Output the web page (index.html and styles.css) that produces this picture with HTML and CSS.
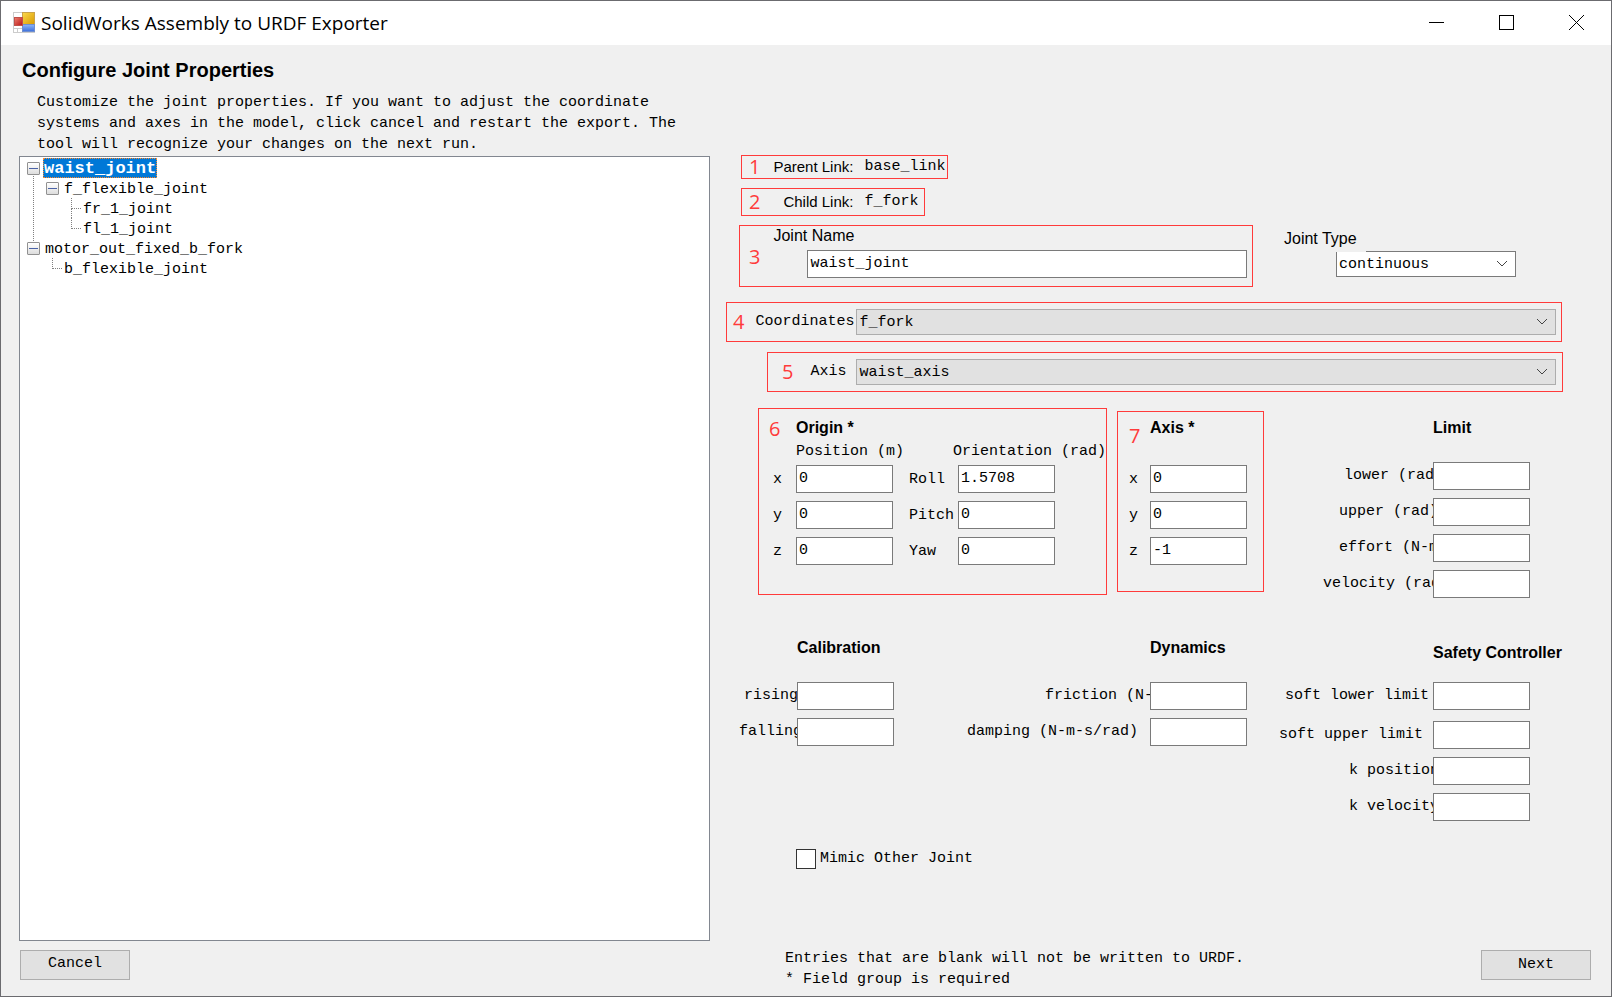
FILE: index.html
```html
<!DOCTYPE html>
<html lang="en">
<head>
    <meta charset="UTF-8">
    <meta name="viewport" content="width=device-width, initial-scale=1.0">
    <title>SolidWorks Assembly to URDF Exporter</title>
    <link rel="stylesheet" href="styles.css">
</head>
<body>

    <!-- Title bar -->
    <header class="title-bar">
        <svg class="app-icon" width="22" height="22" viewBox="0 0 22 22">
            <defs>
                <linearGradient id="yellow" x1="0" y1="0" x2="1" y2="1">
                    <stop offset="0" stop-color="#fbd84c"/>
                    <stop offset="1" stop-color="#d99a00"/>
                </linearGradient>
                <linearGradient id="blue" x1="0" y1="0" x2="0" y2="1">
                    <stop offset="0" stop-color="#8fb6f7"/>
                    <stop offset="1" stop-color="#3c6fdc"/>
                </linearGradient>
                <linearGradient id="red" x1="0" y1="0" x2="1" y2="1">
                    <stop offset="0" stop-color="#ee8070"/>
                    <stop offset="1" stop-color="#b81414"/>
                </linearGradient>
            </defs>
            <rect x="0.5" y="0.5" width="21" height="20" fill="#fff" stroke="#ccc"/>
            <path d="M4.500 16v5M0 16.500h9" stroke="#ccc"/>
            <rect x="9.500" y="0.500" width="12" height="12" fill="url(#yellow)" stroke="#c9a24a"/>
            <rect x="9.500" y="12.500" width="12" height="7" fill="url(#blue)" stroke="#6f8fd0"/>
            <rect x="1.500" y="5.500" width="8" height="8" fill="url(#red)" stroke="#c0504a"/>
        </svg>
        <span class="title-text">SolidWorks Assembly to URDF Exporter</span>
        <button class="window-btn" aria-label="Minimize">
            <svg width="15" height="15"><path d="M0 7.500h15" stroke="#000"/></svg>
        </button>
        <button class="window-btn" aria-label="Maximize">
            <svg width="15" height="15"><rect x="0.500" y="0.500" width="14" height="14" fill="none" stroke="#000"/></svg>
        </button>
        <button class="window-btn" aria-label="Close">
            <svg width="15" height="15"><path d="M0 0l15 15M15 0L0 15" stroke="#000"/></svg>
        </button>
    </header>

    <main class="columns main">

        <!-- Joint tree -->
        <section class="tree-panel">
            <h1>Configure Joint Properties</h1>
            <p class="intro">Customize the joint properties. If you want to adjust the coordinate systems and axes in the model, click cancel and restart the export. The tool will recognize your changes on the next run.</p>
            <div class="tree">
                <ul>
                    <li>
                        <div class="node"><button class="toggle" aria-label="Collapse"></button><span class="name selected">waist_joint</span></div>
                        <ul>
                            <li>
                                <div class="node"><button class="toggle" aria-label="Collapse"></button><span class="name">f_flexible_joint</span></div>
                                <ul>
                                    <li class="leaf"><div class="node"><span class="name">fr_1_joint</span></div></li>
                                    <li class="leaf"><div class="node"><span class="name">fl_1_joint</span></div></li>
                                </ul>
                            </li>
                        </ul>
                    </li>
                    <li>
                        <div class="node"><button class="toggle" aria-label="Collapse"></button><span class="name">motor_out_fixed_b_fork</span></div>
                        <ul>
                            <li class="leaf"><div class="node"><span class="name">b_flexible_joint</span></div></li>
                        </ul>
                    </li>
                </ul>
            </div>
        </section>

        <!-- Joint form -->
        <form class="joint-form">
            <div class="marked link-row parent-row">
                <span class="mark">1</span>
                <span class="link-label">Parent Link:</span>
                <span>base_link</span>
            </div>
            <div class="marked link-row child-row">
                <span class="mark">2</span>
                <span class="link-label">Child Link:</span>
                <span>f_fork</span>
            </div>

            <div class="name-row">
                <div class="marked name-box">
                    <span class="mark">3</span>
                    <div class="name-field">
                        <label class="sans" for="jointName">Joint Name</label>
                        <input type="text" id="jointName" value="waist_joint">
                    </div>
                </div>
                <div class="type-field">
                    <label class="sans" for="jointType">Joint Type</label>
                    <div class="select white">
                        <select id="jointType"><option>continuous</option></select>
                        <svg class="chevron" width="12" height="8"><path d="M1 1l5 5 5-5" fill="none" stroke="#444"/></svg>
                    </div>
                </div>
            </div>

            <div class="marked select-row coordinates-row">
                <span class="mark">4</span>
                <label for="coordinates">Coordinates</label>
                <div class="select">
                    <select id="coordinates"><option>f_fork</option></select>
                    <svg class="chevron" width="12" height="8"><path d="M1 1l5 5 5-5" fill="none" stroke="#444"/></svg>
                </div>
            </div>
            <div class="marked select-row axis-row">
                <span class="mark">5</span>
                <label for="axis">Axis</label>
                <div class="select">
                    <select id="axis"><option>waist_axis</option></select>
                    <svg class="chevron" width="12" height="8"><path d="M1 1l5 5 5-5" fill="none" stroke="#444"/></svg>
                </div>
            </div>

            <div class="groups">
                <div class="marked origin">
                    <span class="mark">6</span>
                    <h2>Origin *</h2>
                    <span class="position-head">Position (m)</span>
                    <span class="orientation-head">Orientation (rad)</span>
                    <label class="coord" for="posX">x</label>
                    <input type="text" id="posX" value="0">
                    <label class="angle" for="roll">Roll</label>
                    <input type="text" id="roll" value="1.5708">
                    <label class="coord" for="posY">y</label>
                    <input type="text" id="posY" value="0">
                    <label class="angle" for="pitch">Pitch</label>
                    <input type="text" id="pitch" value="0">
                    <label class="coord" for="posZ">z</label>
                    <input type="text" id="posZ" value="0">
                    <label class="angle" for="yaw">Yaw</label>
                    <input type="text" id="yaw" value="0">
                </div>

                <div class="marked axis-group">
                    <span class="mark">7</span>
                    <h2>Axis *</h2>
                    <label for="axisX">x</label>
                    <input type="text" id="axisX" value="0">
                    <label for="axisY">y</label>
                    <input type="text" id="axisY" value="0">
                    <label for="axisZ">z</label>
                    <input type="text" id="axisZ" value="-1">
                </div>

                <div class="group limit">
                    <h2>Limit</h2>
                    <div class="field"><label class="lower" for="lower">lower (rad)</label><input type="text" id="lower"></div>
                    <div class="field"><label class="upper" for="upper">upper (rad)</label><input type="text" id="upper"></div>
                    <div class="field"><label class="upper" for="effort">effort (N-m)</label><input type="text" id="effort"></div>
                    <div class="field"><label class="velocity" for="velocity">velocity (rad/s)</label><input type="text" id="velocity"></div>
                </div>
            </div>

            <div class="groups optional">
                <div class="group calibration">
                    <h2>Calibration</h2>
                    <div class="field"><label class="rising" for="rising">rising</label><input type="text" id="rising"></div>
                    <div class="field"><label class="falling" for="falling">falling</label><input type="text" id="falling"></div>
                </div>
                <div class="group dynamics">
                    <h2>Dynamics</h2>
                    <div class="field"><label class="friction" for="friction">friction (N-m)</label><input type="text" id="friction"></div>
                    <div class="field"><label class="damping" for="damping">damping (N-m-s/rad)</label><input type="text" id="damping"></div>
                </div>
                <div class="group safety">
                    <h2>Safety Controller</h2>
                    <div class="field first"><label class="soft-lower" for="softLower">soft lower limit</label><input type="text" id="softLower"></div>
                    <div class="field"><label class="soft-upper" for="softUpper">soft upper limit</label><input type="text" id="softUpper"></div>
                    <div class="field"><label class="gain" for="kPosition">k position</label><input type="text" id="kPosition"></div>
                    <div class="field"><label class="gain" for="kVelocity">k velocity</label><input type="text" id="kVelocity"></div>
                </div>
            </div>

            <div class="mimic">
                <input type="checkbox" id="mimic">
                <label for="mimic">Mimic Other Joint</label>
            </div>
        </form>
    </main>

    <!-- Footer -->
    <footer class="columns footer">
        <div class="footer-left">
            <button class="btn">Cancel</button>
        </div>
        <div class="footer-right">
            <p>Entries that are blank will not be written to URDF.<br>* Field group is required</p>
            <button class="btn">Next</button>
        </div>
    </footer>

</body>
</html>
```
FILE: styles.css
```css
/* Basic styling */
* {
    box-sizing: border-box;
}

body {
    margin: 0;
    min-height: 100vh;
    display: flex;
    flex-direction: column;
    border: 1px solid #6b6b6f;
    background-color: #f0f0f0;
    color: #000;
    font-family: "Liberation Mono", monospace;
    font-size: 15px;
    line-height: 20px;
}

h1, h2, p, ul {
    margin: 0;
    padding: 0;
}

h1, h2, .sans, .link-label {
    font-family: "Liberation Sans", Arial, sans-serif;
}

h1 {
    font-size: 20px;
    line-height: 24px;
}

h2 {
    font-size: 16px;
    line-height: 22px;
    white-space: nowrap;
}

label {
    white-space: nowrap;
}

input, select, button {
    font: inherit;
    color: inherit;
    border-radius: 0;
}

input[type="text"] {
    width: 97px;
    height: 28px;
    padding: 0 2px 2px;
    border: 1px solid #7a7a7a;
    background-color: white;
}

/* Title bar */
.title-bar {
    display: flex;
    align-items: center;
    height: 44px;
    padding-left: 12px;
    background-color: white;
}

.title-text {
    flex: 1;
    margin-left: 6px;
    font-family: "Open Sans", "Noto Sans", sans-serif;
    font-size: 19px;
    line-height: 24px;
}

.window-btn {
    display: flex;
    align-items: center;
    justify-content: center;
    width: 70px;
    height: 44px;
    padding: 0 0 1px;
    border: none;
    background: none;
}

/* Two columns shared by the main area and the footer */
.columns {
    display: grid;
    grid-template-columns: 710fr 900fr;
}

.main {
    flex: 1;
}

/* Tree panel */
.tree-panel {
    display: flex;
    flex-direction: column;
    padding: 13px 1px 0 18px;
}

.tree-panel h1 {
    padding-left: 3px;
}

.intro {
    max-width: 680px;
    margin-top: 10px;
    padding-left: 18px;
    line-height: 21px;
}

.tree {
    flex: 1;
    margin-top: 1px;
    padding: 1px 0 0 7px;
    border: 1px solid #828790;
    background-color: white;
}

.tree ul {
    list-style: none;
}

.tree li {
    position: relative;
}

.tree ul ul {
    padding-left: 19px;
}

.node {
    display: flex;
    align-items: center;
    gap: 3px;
    height: 20px;
}

.leaf .node {
    padding-left: 16px;
}

.name {
    padding: 3px 2px 0;
}

.selected {
    padding: 1px 0 0;
    border: 1px dotted #ff8728;
    background-color: #0078d7;
    color: white;
    font-size: 17px;
    font-weight: bold;
    line-height: 17px;
}

.toggle {
    position: relative;
    width: 13px;
    height: 13px;
    padding: 0;
    border: 1px solid #919191;
    border-radius: 1px;
    background: linear-gradient(#fff, #ddd);
}

.toggle::before {
    content: "";
    position: absolute;
    left: 1px;
    top: 5px;
    width: 9px;
    height: 1px;
    background-color: #4b63a7;
}

/* Dotted connectors */
.tree > ul > li:first-child::before {
    content: "";
    position: absolute;
    left: 6px;
    top: 18px;
    bottom: -3px;
    border-left: 1px dotted #808080;
}

.leaf::before {
    content: "";
    position: absolute;
    left: 6px;
    top: 0;
    width: 9px;
    height: 10px;
    border-left: 1px dotted #808080;
    border-bottom: 1px dotted #808080;
}

.leaf:not(:last-child)::after {
    content: "";
    position: absolute;
    left: 6px;
    top: 10px;
    height: 10px;
    border-left: 1px dotted #808080;
}

/* Joint form */
.joint-form {
    padding: 110px 48px 0 15px;
}

.marked {
    border: 1px solid #ff3b3b;
}

.mark {
    color: #ff3b3b;
    font-family: "Open Sans", "Noto Sans", sans-serif;
    font-size: 20px;
    font-weight: 500;
    line-height: 24px;
}

.link-row {
    display: flex;
    align-items: center;
    width: fit-content;
    margin: 0 0 9px 15px;
    padding-left: 7px;
}

.parent-row {
    height: 24px;
    padding-right: 2px;
}

.child-row {
    height: 28px;
    padding-right: 6px;
}

.link-label {
    width: 93px;
    margin-right: 11px;
    text-align: right;
}

.name-row {
    display: flex;
    margin: 0 47px 0 13px;
}

.name-box {
    flex: 1;
    display: flex;
    align-items: center;
    padding: 0 5px 8px 9px;
}

.name-box .mark {
    padding-top: 10px;
}

.name-field {
    flex: 1;
    display: flex;
    flex-direction: column;
    gap: 4px;
    padding-left: 13px;
}

.name-field input[type="text"] {
    width: auto;
    margin-left: 34px;
}

.sans {
    font-size: 16px;
}

.type-field {
    width: 232px;
    margin: 3px 0 0 31px;
}

/* The label covers the corner of the drop-down below it */
.type-field label {
    position: relative;
    z-index: 1;
    display: block;
    width: 82px;
    height: 24px;
    background-color: #f0f0f0;
    line-height: 22px;
}

.type-field .select {
    margin: -1px 0 0 52px;
}

/* Drop-downs */
.select {
    position: relative;
    flex: 1;
}

.select select {
    display: block;
    width: 100%;
    height: 26px;
    padding: 2px 24px 0 2px;
    border: 1px solid #adadad;
    background-color: #e1e1e1;
    appearance: none;
}

.white select {
    border-color: #7a7a7a;
    background-color: white;
}

.chevron {
    position: absolute;
    right: 8px;
    top: 9px;
    pointer-events: none;
}

.select-row {
    display: flex;
    align-items: center;
    height: 40px;
    padding-right: 5px;
}

.select-row label {
    line-height: 22px;
}

.coordinates-row {
    margin: 15px 1px 0 0;
    padding-left: 6px;
}

.coordinates-row label {
    width: 101px;
    margin-left: 11px;
}

.axis-row {
    margin: 10px 0 0 41px;
    padding: 0 6px 0 14px;
}

.axis-row label {
    width: 46px;
    margin-left: 17px;
}

/* Field groups */
.groups {
    display: flex;
    align-items: flex-start;
    margin-top: 16px;
    padding-right: 33px;
}

.origin {
    display: grid;
    grid-template-columns: 27px 97px 65px 1fr;
    grid-template-rows: 23px 25px repeat(3, 36px);
    width: 349px;
    margin-left: 32px;
    padding: 8px 0 21px 10px;
}

.origin h2 {
    grid-column: 2 / 5;
}

.position-head {
    grid-column: 2;
    line-height: 24px;
    white-space: nowrap;
}

.orientation-head {
    grid-column: 3 / 5;
    justify-self: end;
    line-height: 24px;
    white-space: nowrap;
}

.origin label, .axis-group label {
    line-height: 30px;
}

.coord {
    padding-left: 4px;
}

.angle {
    padding-left: 16px;
}

.axis-group {
    display: grid;
    grid-template-columns: 21px 1fr;
    grid-template-rows: 48px repeat(3, 36px);
    width: 147px;
    margin: 3px 0 0 10px;
    padding: 5px 0 18px 11px;
}

.axis-group .mark {
    padding-top: 7px;
}

.group h2 {
    width: 97px;
    height: 45px;
    margin-left: auto;
}

.field {
    display: flex;
    justify-content: flex-end;
    height: 36px;
}

/* Long labels run on underneath their text box */
.field label {
    line-height: 28px;
}

.field input[type="text"] {
    position: relative;
    z-index: 1;
}

.limit {
    margin: 9px 0 0 auto;
}

.optional {
    margin-top: 31px;
}

.calibration {
    margin-left: 13px;
}

.dynamics {
    margin-left: 73px;
}

.safety {
    margin-left: auto;
}

.safety h2 {
    padding-top: 5px;
}

.safety .first {
    height: 39px;
}

.lower { width: 89px; }
.upper { width: 94px; }
.velocity { width: 110px; }
.rising { width: 53px; }
.falling { width: 58px; }
.friction { width: 105px; }
.damping { width: 183px; }
.soft-lower { width: 148px; }
.soft-upper { width: 154px; }
.gain { width: 84px; }

.mimic {
    display: flex;
    align-items: center;
    gap: 4px;
    margin: 20px 0 0 70px;
}

.mimic input {
    width: 20px;
    height: 20px;
    margin: 0;
    border: 1px solid #333;
    background-color: white;
    appearance: none;
}

/* Footer */
.footer {
    padding: 6px 0;
}

.footer-left {
    padding: 3px 0 0 19px;
}

.footer-right {
    display: flex;
    justify-content: space-between;
    align-items: flex-start;
    padding: 1px 20px 0 74px;
    line-height: 21px;
}

.footer-right .btn {
    margin-top: 2px;
}

.btn {
    width: 110px;
    height: 30px;
    padding: 0 0 2px;
    border: 1px solid #adadad;
    background-color: #e1e1e1;
}
```
